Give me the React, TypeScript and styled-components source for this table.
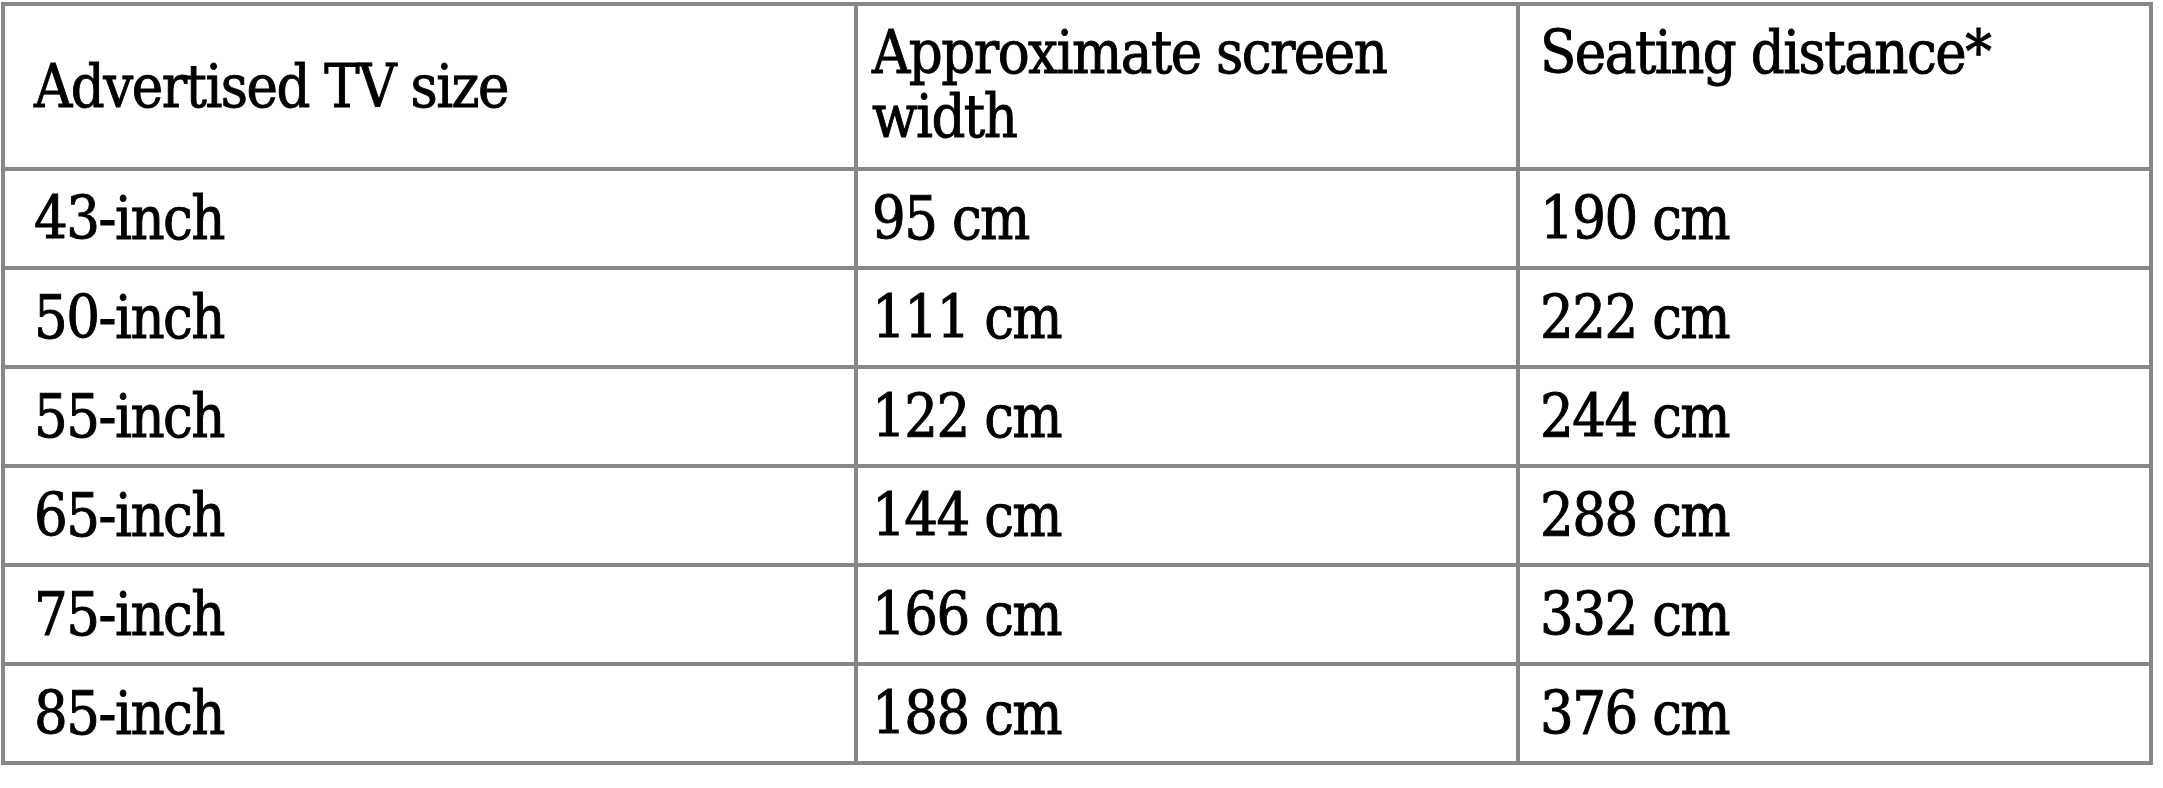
import styled, { createGlobalStyle } from 'styled-components';

const ROWS = [
  ['43-inch', '95 cm', '190 cm'],
  ['50-inch', '111 cm', '222 cm'],
  ['55-inch', '122 cm', '244 cm'],
  ['65-inch', '144 cm', '288 cm'],
  ['75-inch', '166 cm', '332 cm'],
  ['85-inch', '188 cm', '376 cm'],
];

const INDENT = [29, 14, 20];

const GlobalStyle = createGlobalStyle`
  html, body {
    margin: 0;
    padding: 0;
    background: #fff;
  }
  body {
    font-family: 'DejaVu Serif', 'Liberation Serif', serif;
    color: #000;
  }
`;

const Page = styled.div`
  padding: 2px 0 0 1px;
`;

const Table = styled.div`
  display: grid;
  grid-template-columns: 849px 658px 629px;
  grid-template-rows: 161px repeat(6, 95px);
  gap: 4px;
  padding: 4px;
  width: max-content;
  background: #878787;
`;

const Cell = styled.div<{ $indent: number; $top?: boolean }>`
  display: flex;
  flex-direction: column;
  justify-content: ${({ $top }) => ($top ? 'flex-start' : 'center')};
  padding: ${({ $top }) => ($top ? '15px' : '0')} 8px 0 ${({ $indent }) => $indent}px;
  background: #fff;
  font-size: 59px;
  font-stretch: condensed;
  line-height: 64px;
  letter-spacing: -1.5px;
  -webkit-text-stroke: 0.9px #000;
  white-space: pre-line;
`;

export default function App() {
  return (
    <Page>
      <GlobalStyle />
      <Table>
        <Cell $indent={INDENT[0]}>Advertised TV size</Cell>
        <Cell $indent={INDENT[1]} $top>
          {'Approximate screen\nwidth'}
        </Cell>
        <Cell $indent={INDENT[2]} $top>
          Seating distance*
        </Cell>
        {ROWS.map((row) =>
          row.map((text, i) => (
            <Cell key={`${row[0]}-${i}`} $indent={INDENT[i]}>
              {text}
            </Cell>
          )),
        )}
      </Table>
    </Page>
  );
}
